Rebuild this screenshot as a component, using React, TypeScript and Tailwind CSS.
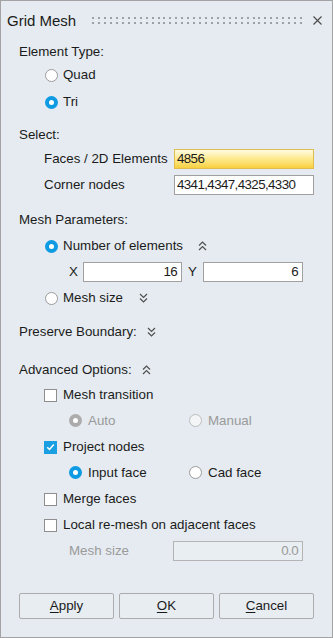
import React from "react";

function Radio({ checked = false, disabled = false }: { checked?: boolean; disabled?: boolean }) {
  if (checked) {
    return (
      <span
        className={
          "w-[13px] h-[13px] rounded-full flex items-center justify-center shrink-0 " +
          (disabled ? "bg-[#acacac]" : "bg-[#0f9be3]")
        }
      >
        <span className="w-[5px] h-[5px] rounded-full bg-white" />
      </span>
    );
  }
  return (
    <span
      className={
        "w-[13px] h-[13px] rounded-full shrink-0 border " +
        (disabled ? "border-[#bdbdbd] bg-[#f3f5f7]" : "border-[#9b9b9b] bg-white")
      }
    />
  );
}

function Check({ checked = false }: { checked?: boolean }) {
  if (checked) {
    return (
      <span className="w-[13px] h-[13px] bg-[#1a9fe3] flex items-center justify-center shrink-0">
        <svg width="9" height="8" viewBox="0 0 9 8">
          <path d="M1.2 4.2 L3.5 6.4 L7.8 1.6" stroke="white" strokeWidth="1.5" fill="none" />
        </svg>
      </span>
    );
  }
  return <span className="w-[13px] h-[13px] border border-[#8e8e8e] bg-white shrink-0" />;
}

function ChevUp() {
  return (
    <svg width="9" height="10" viewBox="0 0 9 10" className="shrink-0">
      <path d="M1 4.5 L4.5 1 L8 4.5 M1 9 L4.5 5.5 L8 9" stroke="#505050" strokeWidth="1.2" fill="none" />
    </svg>
  );
}

function ChevDown() {
  return (
    <svg width="9" height="10" viewBox="0 0 9 10" className="shrink-0">
      <path d="M1 1 L4.5 4.5 L8 1 M1 5.5 L4.5 9 L8 5.5" stroke="#505050" strokeWidth="1.2" fill="none" />
    </svg>
  );
}

function Btn({ first, rest }: { first: string; rest: string }) {
  return (
    <div className="w-[95px] h-[26px] border border-[#acacac] rounded-[2px] bg-[#e8edf1] flex items-center justify-center">
      <span>
        <span className="underline underline-offset-[2px]">{first}</span>
        {rest}
      </span>
    </div>
  );
}

export default function App() {
  const cols = Array.from({ length: 36 });
  return (
    <div className="w-[333px] h-[638px] border border-[#a3a3a3] bg-[#e5ebf0] flex flex-col text-[13.33px] leading-none text-[#1b1b1b] font-['Liberation_Sans',Arial,sans-serif]">
      {/* header */}
      <div className="h-[38px] flex items-center pl-[6px] pr-[10px]">
        <span className="text-[15px]">Grid Mesh</span>
        <div className="flex-1 ml-[16px] mr-[11px] flex justify-between">
          {cols.map((_, i) => (
            <div key={i} className="flex flex-col gap-[3px]">
              <span className="w-[2px] h-[2px] bg-[#9aa1a7]" />
              <span className="w-[2px] h-[2px] bg-[#9aa1a7]" />
            </div>
          ))}
        </div>
        <svg width="9" height="9" viewBox="0 0 9 9" className="shrink-0">
          <path d="M0.5 0.5 L8.5 8.5 M8.5 0.5 L0.5 8.5" stroke="#4a4a4a" strokeWidth="1.1" />
        </svg>
      </div>

      {/* Element type */}
      <div className="mt-[3px] h-[20px] pl-[18px] flex items-center">Element Type:</div>
      <div className="mt-[3px] h-[20px] pl-[44px] flex items-center gap-[5px]">
        <Radio />
        <span>Quad</span>
      </div>
      <div className="mt-[7px] h-[20px] pl-[44px] flex items-center gap-[5px]">
        <Radio checked />
        <span>Tri</span>
      </div>

      {/* Select */}
      <div className="mt-[13px] h-[20px] pl-[18px] flex items-center">Select:</div>
      <div className="mt-[4px] h-[20px] pl-[43px] flex items-center">
        <span className="w-[130px]">Faces / 2D Elements</span>
        <div className="w-[140px] h-[20px] border border-[#e0bd4e] bg-gradient-to-b from-[#fffbe3] via-[#fde98a] to-[#f8d03c] flex items-center pl-[2px] tracking-[-0.6px]">
          4856
        </div>
      </div>
      <div className="mt-[6px] h-[20px] pl-[43px] flex items-center">
        <span className="w-[130px]">Corner nodes</span>
        <div className="w-[140px] h-[20px] border border-[#a0a0a0] bg-white flex items-center pl-[2px] tracking-[-0.6px]">
          4341,4347,4325,4330
        </div>
      </div>

      {/* Mesh parameters */}
      <div className="mt-[15px] h-[20px] pl-[18px] flex items-center">Mesh Parameters:</div>
      <div className="mt-[6px] h-[20px] pl-[44px] flex items-center">
        <Radio checked />
        <span className="ml-[5px]">Number of elements</span>
        <span className="ml-[15px]">
          <ChevUp />
        </span>
      </div>
      <div className="mt-[6px] h-[20px] pl-[68px] flex items-center">
        <span className="w-[14px]">X</span>
        <div className="w-[99px] h-[20px] border border-[#a0a0a0] bg-white flex items-center justify-end pr-[4px] tracking-[-0.6px]">
          16
        </div>
        <span className="w-[21px] pl-[6px]">Y</span>
        <div className="w-[100px] h-[20px] border border-[#a0a0a0] bg-white flex items-center justify-end pr-[4px] tracking-[-0.6px]">
          6
        </div>
      </div>
      <div className="mt-[6px] h-[20px] pl-[44px] flex items-center">
        <Radio />
        <span className="ml-[5px]">Mesh size</span>
        <span className="ml-[16px]">
          <ChevDown />
        </span>
      </div>

      {/* Preserve boundary */}
      <div className="mt-[14px] h-[20px] pl-[18px] flex items-center">
        <span>Preserve Boundary:</span>
        <span className="ml-[10px]">
          <ChevDown />
        </span>
      </div>

      {/* Advanced */}
      <div className="mt-[18px] h-[20px] pl-[18px] flex items-center">
        <span>Advanced Options:</span>
        <span className="ml-[10px]">
          <ChevUp />
        </span>
      </div>
      <div className="mt-[5px] h-[20px] pl-[43px] flex items-center gap-[6px]">
        <Check />
        <span>Mesh transition</span>
      </div>
      <div className="mt-[6px] h-[20px] pl-[68px] flex items-center text-[#9a9a9a]">
        <div className="w-[120px] flex items-center gap-[6px]">
          <Radio checked disabled />
          <span>Auto</span>
        </div>
        <div className="flex items-center gap-[6px]">
          <Radio disabled />
          <span>Manual</span>
        </div>
      </div>
      <div className="mt-[6px] h-[20px] pl-[43px] flex items-center gap-[6px]">
        <Check checked />
        <span>Project nodes</span>
      </div>
      <div className="mt-[6px] h-[20px] pl-[68px] flex items-center">
        <div className="w-[120px] flex items-center gap-[6px]">
          <Radio checked />
          <span>Input face</span>
        </div>
        <div className="flex items-center gap-[6px]">
          <Radio />
          <span>Cad face</span>
        </div>
      </div>
      <div className="mt-[6px] h-[20px] pl-[43px] flex items-center gap-[6px]">
        <Check />
        <span>Merge faces</span>
      </div>
      <div className="mt-[6px] h-[20px] pl-[43px] flex items-center gap-[6px]">
        <Check />
        <span>Local re-mesh on adjacent faces</span>
      </div>
      <div className="mt-[6px] h-[20px] pl-[68px] flex items-center text-[#9a9a9a]">
        <span className="w-[104px]">Mesh size</span>
        <div className="w-[130px] h-[20px] border border-[#b4b4b4] bg-[#e9eef2] flex items-center justify-end pr-[4px] tracking-[-0.6px]">
          0.0
        </div>
      </div>

      {/* Buttons */}
      <div className="mt-[32px] pl-[18px] flex gap-[5px]">
        <Btn first="A" rest="pply" />
        <Btn first="O" rest="K" />
        <Btn first="C" rest="ancel" />
      </div>
    </div>
  );
}
